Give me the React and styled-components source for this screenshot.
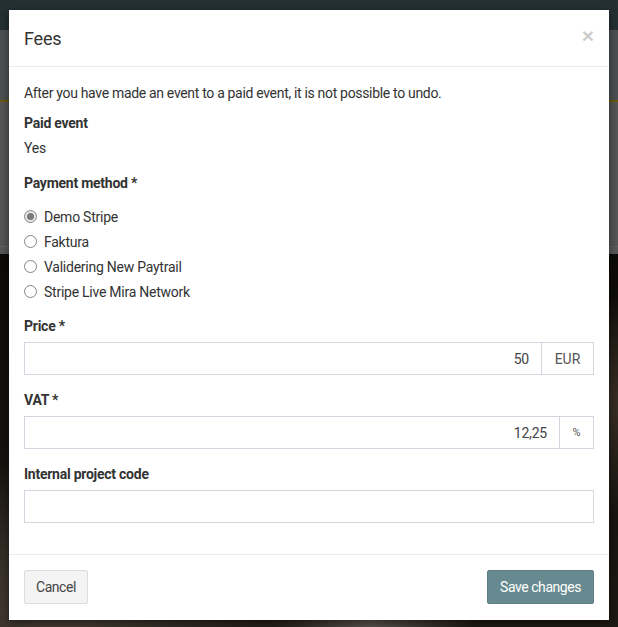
import React from "react";
import styled, { createGlobalStyle } from "styled-components";

const Global = createGlobalStyle`
  html, body { margin: 0; padding: 0; }
  body {
    font-family: Roboto, "Liberation Sans", sans-serif;
    font-size: 14px;
    color: #333;
    background: #15120e;
  }
  * { box-sizing: border-box; }
`;

const Page = styled.div`
  position: relative;
  width: 618px;
  height: 627px;
  overflow: hidden;
  display: flex;
  flex-direction: column;
`;

const TopBar = styled.div`
  height: 30px;
  background: #243033;
`;

const Band = styled.div`
  height: ${(p) => p.$h}px;
  background: ${(p) => p.$bg};
`;

const Photo = styled.div`
  flex: 1;
  background:
    radial-gradient(ellipse at 10% 95%, #4a4038 0%, transparent 30%),
    radial-gradient(ellipse at 60% 98%, #5a5550 0%, transparent 20%),
    radial-gradient(ellipse at 95% 40%, #3a3026 0%, transparent 35%),
    linear-gradient(180deg, #0c0b08 0%, #16130f 60%, #1d1914 100%);
`;

const Dialog = styled.div`
  position: absolute;
  left: 9px;
  top: 10px;
  width: 600px;
  background: #fff;
  box-shadow: 0 3px 9px rgba(0, 0, 0, 0.5);
`;

const Header = styled.div`
  display: flex;
  justify-content: space-between;
  align-items: center;
  height: 57px;
  padding: 0 15px;
  border-bottom: 1px solid #e9ecef;
`;

const Title = styled.h4`
  margin: 0;
  font-size: 18px;
  font-weight: 400;
  color: #333;
  letter-spacing: -0.2px;
`;

const Close = styled.button`
  border: 0;
  background: none;
  padding: 0;
  margin-top: -6px;
  font-size: 21px;
  font-weight: 700;
  line-height: 1;
  color: #000;
  opacity: 0.2;
  font-family: "Liberation Sans", sans-serif;
  cursor: pointer;
`;

const Body = styled.div`
  padding: 16px 15px 16px;
`;

const Intro = styled.p`
  margin: 0 0 10px;
  line-height: 20px;
  letter-spacing: -0.32px;
`;

const Label = styled.div`
  font-weight: 700;
  line-height: 20px;
  margin-top: ${(p) => p.$mt || 0}px;
  letter-spacing: -0.25px;
`;

const Value = styled.div`
  line-height: 20px;
  margin-top: 5px;
  letter-spacing: -0.25px;
`;

const RadioList = styled.div`
  margin-top: 11px;
  margin-bottom: 12px;
  display: flex;
  flex-direction: column;
`;

const RadioRow = styled.label`
  display: flex;
  align-items: center;
  height: 25px;
  gap: 7px;
  letter-spacing: -0.25px;
`;

const RadioDot = styled.span`
  width: 13px;
  height: 13px;
  border-radius: 50%;
  border: 1px solid #858585;
  background: ${(p) => (p.$on ? "#e6e6e6" : "#fff")};
  display: flex;
  align-items: center;
  justify-content: center;
  &::after {
    content: "";
    width: 7px;
    height: 7px;
    border-radius: 50%;
    background: ${(p) => (p.$on ? "#7a7a7a" : "transparent")};
  }
`;

const Group = styled.div`
  margin-bottom: 15px;
`;

const InputGroup = styled.div`
  display: flex;
  height: 33px;
  border: 1px solid #d2d6de;
  margin-top: 6px;
`;

const Input = styled.div`
  flex: 1;
  display: flex;
  align-items: center;
  justify-content: flex-end;
  padding: 0 12px;
  color: #444;
  letter-spacing: -0.2px;
`;

const Addon = styled.div`
  display: flex;
  align-items: center;
  justify-content: center;
  width: ${(p) => p.$w}px;
  border-left: 1px solid #d2d6de;
  color: #555;
  font-size: ${(p) => p.$fs || 14}px;
`;

const Footer = styled.div`
  display: flex;
  justify-content: space-between;
  align-items: center;
  padding: 15px 15px 16px;
  border-top: 1px solid #e9ecef;
`;

const Button = styled.button`
  height: 34px;
  padding: 0 ${(p) => (p.$primary ? 12 : 11)}px;
  font-family: inherit;
  font-size: 14px;
  letter-spacing: -0.45px;
  border-radius: 2px;
  border: 1px solid ${(p) => (p.$primary ? "#5f7f85" : "#dcdcdc")};
  background: ${(p) => (p.$primary ? "#678a90" : "#f4f4f4")};
  color: ${(p) => (p.$primary ? "#fff" : "#444")};
`;

const methods = ["Demo Stripe", "Faktura", "Validering New Paytrail", "Stripe Live Mira Network"];

export default function App() {
  return (
    <>
      <Global />
      <Page>
        <TopBar />
        <Band $h={70} $bg="#4d5051" />
        <Band $h={2} $bg="#6e5c0c" />
        <Band $h={144} $bg="#565656" />
        <Band $h={1} $bg="#606060" />
        <Band $h={7} $bg="#585858" />
        <Photo />
        <Dialog>
          <Header>
            <Title>Fees</Title>
            <Close>×</Close>
          </Header>
          <Body>
            <Intro>After you have made an event to a paid event, it is not possible to undo.</Intro>
            <Label>Paid event</Label>
            <Value>Yes</Value>
            <Label $mt={15}>Payment method *</Label>
            <RadioList>
              {methods.map((m, i) => (
                <RadioRow key={m}>
                  <RadioDot $on={i === 0} />
                  {m}
                </RadioRow>
              ))}
            </RadioList>
            <Group>
              <Label>Price *</Label>
              <InputGroup>
                <Input>50</Input>
                <Addon $w={52}>EUR</Addon>
              </InputGroup>
            </Group>
            <Group>
              <Label>VAT *</Label>
              <InputGroup>
                <Input>12,25</Input>
                <Addon $w={34} $fs={11}>%</Addon>
              </InputGroup>
            </Group>
            <Group>
              <Label>Internal project code</Label>
              <InputGroup>
                <Input />
              </InputGroup>
            </Group>
          </Body>
          <Footer>
            <Button>Cancel</Button>
            <Button $primary>Save changes</Button>
          </Footer>
        </Dialog>
      </Page>
    </>
  );
}
